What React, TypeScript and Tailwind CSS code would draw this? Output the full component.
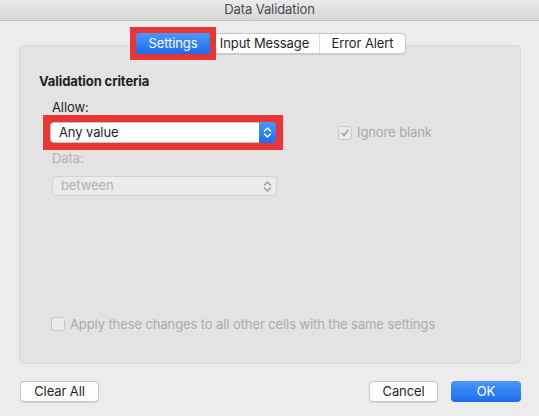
import React from "react";

const Chevrons = ({ color }: { color: string }) => (
  <svg width="9" height="13" viewBox="0 0 9 13" fill="none">
    <path d="M1.5 5 L4.5 2 L7.5 5" stroke={color} strokeWidth="1.4" strokeLinecap="round" strokeLinejoin="round" />
    <path d="M1.5 8 L4.5 11 L7.5 8" stroke={color} strokeWidth="1.4" strokeLinecap="round" strokeLinejoin="round" />
  </svg>
);

export default function App() {
  return (
    <div
      className="w-[539px] h-[416px] bg-[#ececec] flex flex-col text-[13px] tracking-[-0.1px] text-[#1f1f1f] overflow-hidden"
      style={{ fontFamily: "Inter, 'Helvetica Neue', Arial, sans-serif" }}
    >
      {/* title bar */}
      <div className="h-[21px] shrink-0 bg-gradient-to-b from-[#ebebeb] to-[#d6d6d6] border-b border-[#bdbdbd] flex items-center justify-center text-[#4a4a4a] text-[13px]">
        Data Validation
      </div>

      {/* tabs */}
      <div className="relative z-10 mt-[12px] flex justify-center pl-[3px]">
        <div className="flex h-[21px] rounded-[4px] bg-white border border-[#c9c9c9] shadow-[0_0.5px_1px_rgba(0,0,0,0.12)]">
          <div className="-my-[7px] -ml-[7px] p-[6px] bg-[#ea3535] flex">
            <div className="w-[74px] h-[21px] flex items-center justify-center rounded-l-[3px] bg-gradient-to-b from-[#4a97f9] to-[#1b6cf0] text-white">
              Settings
            </div>
          </div>
          <div className="-ml-[6px] w-[110px] flex items-center justify-center border-r border-[#dcdcdc]">
            Input Message
          </div>
          <div className="w-[85px] flex items-center justify-center">Error Alert</div>
        </div>
      </div>

      {/* panel */}
      <div className="mx-[19px] mr-[18px] -mt-[9px] h-[319px] shrink-0 rounded-[5px] bg-[#e3e3e3] border border-[#d8d8d8] flex flex-col pt-[27px] pb-[29px]">
        <div className="pl-[19px] font-bold leading-[16px]">Validation criteria</div>
        <div className="pl-[32px] mt-[10px] leading-[16px]">Allow:</div>
        <div className="mt-[7px] flex items-center">
          <div className="ml-[23px] -my-[7px] p-[7px] bg-[#ea3535] flex">
            <div className="w-[226px] h-[21px] flex rounded-[4px] bg-white border border-[#c4c4c4]">
              <div className="flex-1 flex items-center pl-[8px]">Any value</div>
              <div className="w-[17px] -my-px -mr-px rounded-r-[4px] bg-gradient-to-b from-[#4a97f9] to-[#1b6cf0] flex items-center justify-center">
                <Chevrons color="#ffffff" />
              </div>
            </div>
          </div>
          <div className="ml-[55px] flex items-center text-[#a9a9a9]">
            <div className="w-[14px] h-[14px] rounded-[3px] border border-[#c8c8c8] bg-[#ebebeb] flex items-center justify-center">
              <svg width="10" height="10" viewBox="0 0 10 10" fill="none">
                <path d="M2 5.2 L4 7.5 L8 2" stroke="#a3a3a3" strokeWidth="1.5" strokeLinecap="round" strokeLinejoin="round" />
              </svg>
            </div>
            <span className="ml-[5px]">Ignore blank</span>
          </div>
        </div>
        <div className="pl-[32px] mt-[7px] leading-[16px] text-[#b2b2b2]">Data:</div>
        <div className="ml-[32px] mt-[10px] w-[225px] h-[20px] flex items-center rounded-[4px] bg-[#ebebeb] border border-[#d2d2d2] text-[#b0b0b0]">
          <div className="flex-1 pl-[8px]">between</div>
          <div className="w-[17px] flex items-center justify-center">
            <Chevrons color="#9b9b9b" />
          </div>
        </div>
        <div className="mt-auto ml-[31px] flex items-center text-[#ababab]">
          <div className="w-[14px] h-[14px] rounded-[3px] border border-[#c8c8c8] bg-[#ebebeb]" />
          <span className="ml-[5px]">Apply these changes to all other cells with the same settings</span>
        </div>
      </div>

      {/* buttons */}
      <div className="mt-[17px] flex items-center pl-[20px] pr-[18px]">
        <div className="w-[79px] h-[21px] flex items-center justify-center rounded-[4px] bg-white border border-[#c6c6c6] shadow-[0_0.5px_1px_rgba(0,0,0,0.1)]">
          Clear All
        </div>
        <div className="ml-auto w-[69px] h-[21px] flex items-center justify-center rounded-[4px] bg-white border border-[#c6c6c6] shadow-[0_0.5px_1px_rgba(0,0,0,0.1)]">
          Cancel
        </div>
        <div className="ml-[13px] w-[70px] h-[21px] flex items-center justify-center rounded-[4px] bg-gradient-to-b from-[#4a97f9] to-[#1b6cf0] text-white">
          OK
        </div>
      </div>
    </div>
  );
}
